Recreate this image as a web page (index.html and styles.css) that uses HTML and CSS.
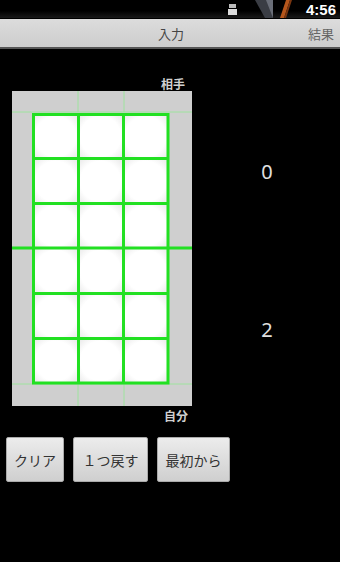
FILE: index.html
```html
<!DOCTYPE html>
<html lang="ja">
<head>
<meta charset="utf-8">
<link rel="stylesheet" href="styles.css">
</head>
<body>
<div class="status">
  <svg class="status-icons" width="70" height="18" viewBox="0 0 70 18">
    <rect x="4" y="4" width="7" height="4" fill="#bbb"/>
    <rect x="3" y="9" width="9" height="6" fill="#ddd"/>
    <polygon points="30,0 46,0 48,18 40,18" fill="#3a3d44"/>
    <polygon points="41,0 48,0 48,18" fill="#6a6e78"/>
    <polygon points="55,18 59,18 65,0 61,0" fill="#b5561c"/>
    <polygon points="59,18 61,18 67,0 65,0" fill="#7a3610"/>
  </svg>
  <span class="time">4:56</span>
</div>
<div class="tabs">
  <span class="tab tab-active">入力</span>
  <span class="tab tab-next">結果</span>
</div>
<div class="main">
  <div class="field-col">
    <div class="label">相手</div>
    <svg class="board" width="180" height="315" viewBox="0 0 180 315">
      <defs>
        <radialGradient id="cell" cx="50%" cy="50%" r="75%">
          <stop offset="60%" stop-color="#ffffff"/>
          <stop offset="100%" stop-color="#e2e2e2"/>
        </radialGradient>
      </defs>
      <rect x="0" y="0" width="180" height="315" fill="#cfcfcf"/>
      <g fill="url(#cell)">
        <rect x="21" y="23" width="45" height="45"/>
        <rect x="66" y="23" width="45" height="45"/>
        <rect x="111" y="23" width="45" height="45"/>
        <rect x="21" y="68" width="45" height="45"/>
        <rect x="66" y="68" width="45" height="45"/>
        <rect x="111" y="68" width="45" height="45"/>
        <rect x="21" y="113" width="45" height="44"/>
        <rect x="66" y="113" width="45" height="44"/>
        <rect x="111" y="113" width="45" height="44"/>
        <rect x="21" y="157" width="45" height="46"/>
        <rect x="66" y="157" width="45" height="46"/>
        <rect x="111" y="157" width="45" height="46"/>
        <rect x="21" y="203" width="45" height="45"/>
        <rect x="66" y="203" width="45" height="45"/>
        <rect x="111" y="203" width="45" height="45"/>
        <rect x="21" y="248" width="45" height="44"/>
        <rect x="66" y="248" width="45" height="44"/>
        <rect x="111" y="248" width="45" height="44"/>
      </g>
      <g stroke="#9ee39e" stroke-width="1">
        <line x1="0" y1="21" x2="180" y2="21"/>
        <line x1="0" y1="293" x2="180" y2="293"/>
        <line x1="66" y1="0" x2="66" y2="21"/>
        <line x1="112" y1="0" x2="112" y2="21"/>
        <line x1="66" y1="293" x2="66" y2="315"/>
        <line x1="112" y1="293" x2="112" y2="315"/>
      </g>
      <g stroke="#22e022" stroke-width="3" fill="none">
        <rect x="21.5" y="23.5" width="134.5" height="268.5"/>
        <line x1="66.5" y1="23" x2="66.5" y2="292"/>
        <line x1="111.5" y1="23" x2="111.5" y2="292"/>
        <line x1="21" y1="67.5" x2="156" y2="67.5"/>
        <line x1="21" y1="112.5" x2="156" y2="112.5"/>
        <line x1="0" y1="157" x2="180" y2="157"/>
        <line x1="21" y1="202.5" x2="156" y2="202.5"/>
        <line x1="21" y1="247.5" x2="156" y2="247.5"/>
      </g>
    </svg>
    <div class="label label-bottom">自分</div>
  </div>
  <div class="score-col">
    <div class="score score-top">0</div>
    <div class="score score-bottom">2</div>
  </div>
</div>
<div class="buttons">
  <button class="btn btn-clear">クリア</button>
  <button class="btn btn-undo">１つ戻す</button>
  <button class="btn btn-reset">最初から</button>
</div>
</body>
</html>
```
FILE: styles.css
```css
html, body {
  margin: 0;
  padding: 0;
  background: #000;
  width: 340px;
  height: 562px;
  overflow: hidden;
  font-family: "Noto Sans CJK JP", "Noto Sans", sans-serif;
}
.status {
  height: 18px;
  background: linear-gradient(#000 0%, #000 60%, #1a1a1a 100%);
  display: flex;
  align-items: center;
  justify-content: flex-end;
}
.status-icons {
  display: block;
  margin-right: 11px;
}
.time {
  color: #fff;
  font-family: "Liberation Sans", sans-serif;
  font-weight: bold;
  font-size: 15px;
  line-height: 17px;
  margin-right: 4px;
}
.tabs {
  height: 28px;
  margin-top: 1px;
  background: linear-gradient(#dcdcdc, #cdcdcd);
  border-bottom: 2px solid #555;
  display: flex;
  align-items: center;
  overflow: hidden;
  white-space: nowrap;
}
.tab {
  font-size: 13px;
  color: #444;
  flex: none;
}
.tab-active {
  box-sizing: border-box;
  width: 306px;
  padding-left: 36px;
  text-align: center;
}
.tab-next {
  color: #666;
  padding-left: 2px;
}
.main {
  display: flex;
}
.field-col {
  margin-left: 12px;
  width: 180px;
  display: flex;
  flex-direction: column;
}
.label {
  color: #d0d0d0;
  font-size: 12px;
  font-weight: bold;
  line-height: 14px;
  text-align: right;
  padding-right: 7px;
  margin-top: 28px;
  margin-bottom: 0;
}
.label-bottom {
  margin-top: 3px;
  padding-right: 4px;
}
.board {
  display: block;
}
.score-col {
  flex: 1;
  display: flex;
  flex-direction: column;
  align-items: center;
  padding-left: 2px;
}
.score {
  color: #e0e0e0;
  font-family: "Noto Sans", sans-serif;
  font-size: 20px;
  line-height: 24px;
}
.score-top {
  margin-top: 111px;
}
.score-bottom {
  margin-top: 134px;
}
.buttons {
  display: flex;
  gap: 9px;
  margin-top: 14px;
  padding-left: 6px;
}
.btn {
  height: 45px;
  border: 1px solid #aaa;
  border-radius: 2px;
  background: linear-gradient(#ececec, #cfcfcf);
  color: #333;
  font-family: "Noto Sans CJK JP", sans-serif;
  font-size: 14px;
  padding: 0;
  margin: 0;
}
.btn-clear { width: 58px; }
.btn-undo { width: 75px; }
.btn-reset { width: 73px; }
```
